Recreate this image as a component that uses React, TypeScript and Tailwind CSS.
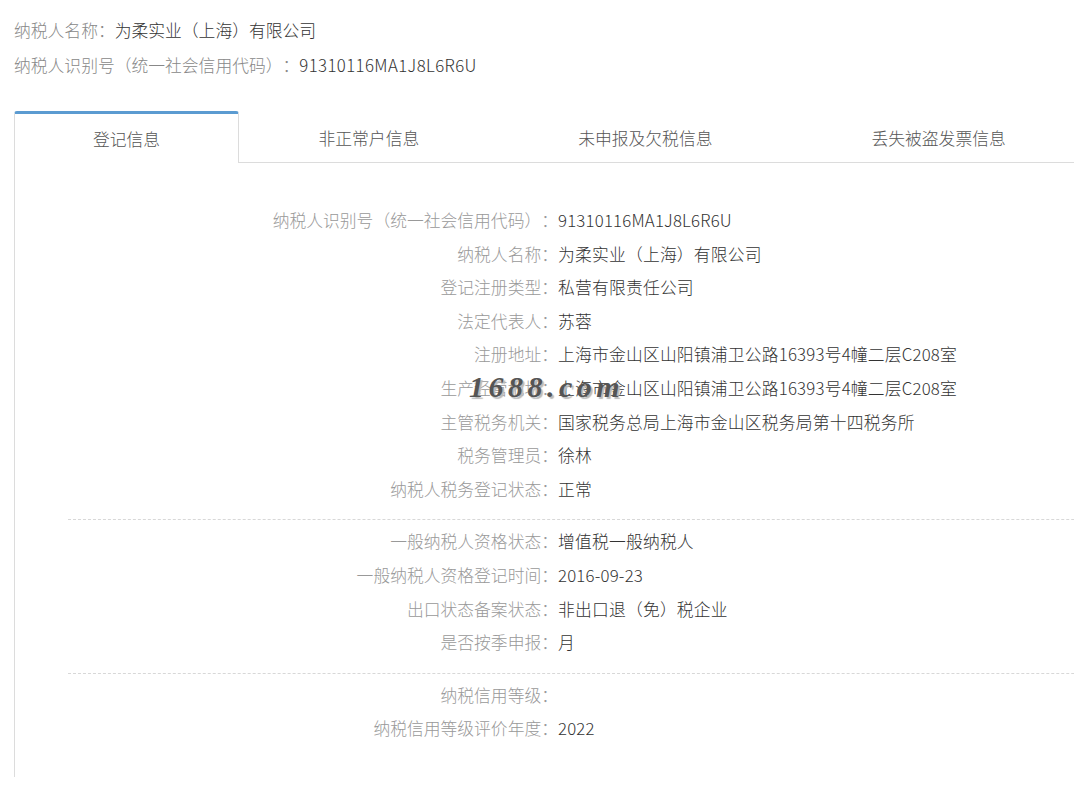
import React from "react";

const font = '"Noto Sans CJK SC", "Noto Sans", sans-serif';

type Row = { label: string; value: string };

const group1: Row[] = [
  { label: "纳税人识别号（统一社会信用代码）：", value: "91310116MA1J8L6R6U" },
  { label: "纳税人名称：", value: "为柔实业（上海）有限公司" },
  { label: "登记注册类型：", value: "私营有限责任公司" },
  { label: "法定代表人：", value: "苏蓉" },
  { label: "注册地址：", value: "上海市金山区山阳镇浦卫公路16393号4幢二层C208室" },
  { label: "生产经营地址：", value: "上海市金山区山阳镇浦卫公路16393号4幢二层C208室" },
  { label: "主管税务机关：", value: "国家税务总局上海市金山区税务局第十四税务所" },
  { label: "税务管理员：", value: "徐林" },
  { label: "纳税人税务登记状态：", value: "正常" },
];

const group2: Row[] = [
  { label: "一般纳税人资格状态：", value: "增值税一般纳税人" },
  { label: "一般纳税人资格登记时间：", value: "2016-09-23" },
  { label: "出口状态备案状态：", value: "非出口退（免）税企业" },
  { label: "是否按季申报：", value: "月" },
];

const group3: Row[] = [
  { label: "纳税信用等级：", value: "" },
  { label: "纳税信用等级评价年度：", value: "2022" },
];

function Rows({ rows }: { rows: Row[] }) {
  return (
    <div className="grid grid-cols-[543px_1fr] leading-[33.6px] text-[16.8px]">
      {rows.map((r, i) => (
        <React.Fragment key={i}>
          <div className="text-right text-[#999] whitespace-nowrap">{r.label}</div>
          <div className="text-[#333] whitespace-nowrap tracking-[0.2px]">{r.value}</div>
        </React.Fragment>
      ))}
    </div>
  );
}

export default function App() {
  return (
    <div
      className="relative w-[1074px] h-[786px] overflow-hidden bg-white font-light [text-spacing-trim:space-all]"
      style={{ fontFamily: font }}
    >
      <div className="pl-[14px] pt-[13px] text-[16.8px] leading-[35px]">
        <div>
          <span className="text-[#888]">纳税人名称：</span>
          <span className="text-[#333]">为柔实业（上海）有限公司</span>
        </div>
        <div>
          <span className="text-[#888]">纳税人识别号（统一社会信用代码）：</span>
          <span className="text-[#333] tracking-[0.4px]">91310116MA1J8L6R6U</span>
        </div>
      </div>

      <div className="ml-[14px] mt-[28px] w-[1200px]">
        <div className="flex text-[16.8px] text-[#555]">
          <div className="w-[225px] h-[52px] pt-[3px] flex items-center justify-center border-t-[3px] border-t-[#5b9bd1] border-x border-x-[#dcdcdc] rounded-t-[3px] whitespace-nowrap">
            登记信息
          </div>
          <div className="h-[52px] pt-[5px] px-[79.5px] flex items-center border-b border-b-[#dcdcdc] whitespace-nowrap">
            非正常户信息
          </div>
          <div className="h-[52px] pt-[5px] px-[79.5px] flex items-center border-b border-b-[#dcdcdc] whitespace-nowrap">
            未申报及欠税信息
          </div>
          <div className="h-[52px] pt-[5px] px-[79.5px] flex items-center border-b border-b-[#dcdcdc] whitespace-nowrap">
            丢失被盗发票信息
          </div>
          <div className="flex-1 h-[52px] border-b border-b-[#dcdcdc]" />
        </div>

        <div className="border-l border-l-[#dcdcdc] h-[614px] pt-[41px]">
          <Rows rows={group1} />
          <div className="ml-[53px] mt-[13px] mb-[5px] border-t border-dashed border-t-[#d8d8d8]" />
          <Rows rows={group2} />
          <div className="ml-[53px] mt-[13px] mb-[5px] border-t border-dashed border-t-[#d8d8d8]" />
          <Rows rows={group3} />
        </div>
      </div>

      <div
        className="absolute left-[469px] top-[372px] text-[30px] font-bold italic tracking-[4.5px] text-[#555] leading-none"
        style={{
          fontFamily: '"Liberation Serif", "DejaVu Serif", serif',
          textShadow: "2px 2px 1px #bbb",
        }}
      >
        1688.com
      </div>
    </div>
  );
}
